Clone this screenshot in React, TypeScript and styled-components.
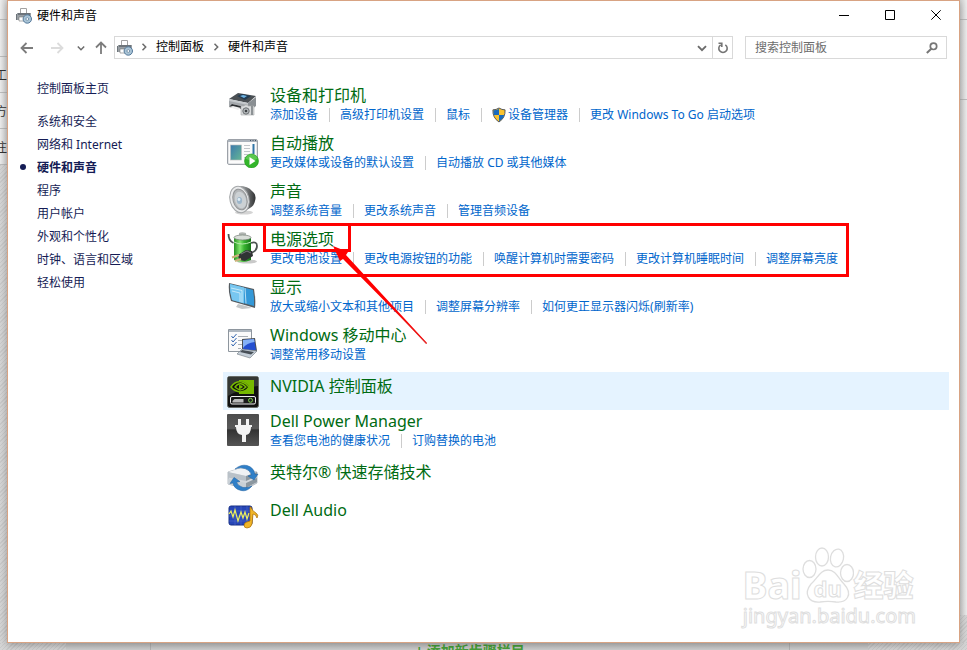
import React from "react";
import styled, { createGlobalStyle, css } from "styled-components";

const GlobalStyle = createGlobalStyle`
  *, *::before, *::after { box-sizing: border-box; }
  body { margin: 0; background: #e0e0e0; }
  body, button, input {
    font-family: "Noto Sans", "Noto Sans CJK SC", sans-serif;
    font-size: 12px;
  }
  button { border: 0; padding: 0; background: none; color: inherit; cursor: pointer; }
  a { text-decoration: none; }
  ul { list-style: none; margin: 0; padding: 0; }
  svg { display: block; flex: none; }
`;

/* ---------- page behind the window ---------- */

const Page = styled.div`
  display: grid;
  grid-template-columns: 7px minmax(0, 1fr) 7px;
  grid-template-rows: minmax(0, 1fr) 7px;
  min-height: 100vh;
  overflow: hidden;
`;

const hatch = css`
  background: repeating-linear-gradient(135deg, #cacaca 0 1px, #d6d6d6 1px 3px);
`;

const Rail = styled.div<{ $side: "left" | "right" }>`
  display: flex;
  flex-direction: column;
  overflow: hidden;
  background: linear-gradient(
    ${(p) => (p.$side === "left" ? "to right" : "to left")},
    #ededed,
    #d4d4d4
  );
`;

const RailCell = styled.div<{ $height: number }>`
  display: flex;
  flex: none;
  align-items: center;
  height: ${(p) => p.$height}px;
  border-bottom: 1px solid #bdbdbd;
  color: #333;
  white-space: nowrap;
`;

const RailText = styled.span`
  margin-left: -5px;
`;

const RailTexture = styled.div`
  flex: 1;
  ${hatch}
`;

const RailBottom = styled.div`
  height: 28px;
  ${hatch}
`;

const RailSpace = styled.div`
  flex: 1;
`;

const Foot = styled.div`
  grid-column: 1 / -1;
  display: grid;
  grid-template-columns: 66px minmax(0, 1fr) 99px;
  overflow: hidden;
  ${hatch}
`;

const FootPanel = styled.div`
  grid-column: 2;
  display: flex;
  justify-content: center;
  padding: 0 78px 0 84px;
  background: linear-gradient(#c6c6c6, #dedede);
`;

const FootCell = styled.div`
  flex: 1;
  overflow: hidden;
  border: solid #b5b5b5;
  border-width: 0 1px;
  text-align: center;
`;

const FootLink = styled.a`
  color: #4aa33a;
  font-size: 14px;
  line-height: 12px;
  font-weight: 700;
`;

/* ---------- window ---------- */

const Window = styled.div`
  display: flex;
  flex-direction: column;
  border: 1px solid #d8a383;
  background: #fff;
  box-shadow: 0 2px 8px rgba(0, 0, 0, 0.3);
  position: relative;
`;

const TitleBar = styled.header`
  display: flex;
  align-items: center;
  height: 29px;
  padding-left: 8px;
  gap: 5px;
  color: #000;
`;

const WindowTitle = styled.h1`
  flex: 1;
  margin: 0;
  font-size: 12px;
  font-weight: 400;
  line-height: 18px;
`;

const Captions = styled.div`
  display: flex;
`;

const CaptionButton = styled.button`
  display: flex;
  align-items: center;
  justify-content: center;
  width: 46px;
  height: 29px;
  padding-bottom: 1px;
`;

const NavBar = styled.nav`
  display: flex;
  align-items: center;
  padding: 6px 12px 0 4px;
`;

const NavButton = styled.button<{ $width: number }>`
  display: flex;
  align-items: center;
  justify-content: center;
  width: ${(p) => p.$width}px;
  height: 23px;
`;

const AddressBar = styled.div`
  display: flex;
  flex: 1;
  align-items: center;
  height: 23px;
  margin: 0 12px 0 2px;
  padding-left: 2px;
  border: 1px solid #d9d9d9;
`;

const Crumbs = styled.div`
  display: flex;
  flex: 1;
  align-items: center;
  gap: 8px;
  padding: 0 0 2px 7px;
`;

const Crumb = styled.a`
  color: #000;
  line-height: 18px;
`;

const RefreshButton = styled.button`
  display: flex;
  align-items: center;
  justify-content: center;
  width: 20px;
  height: 21px;
  border-left: 1px solid #d9d9d9;
`;

const SearchBox = styled.label`
  display: flex;
  align-items: center;
  width: 202px;
  height: 23px;
  padding: 0 8px 0 9px;
  border: 1px solid #d9d9d9;
`;

const SearchInput = styled.input`
  flex: 1;
  min-width: 0;
  padding: 0;
  border: 0;
  outline: 0;
  background: none;
  &::placeholder { color: #6d6d6d; opacity: 1; }
`;

const Body = styled.div`
  display: flex;
  flex: 1;
  padding-right: 10px;
`;

const Sidebar = styled.aside`
  width: 215px;
  flex: none;
  padding: 17px 0 0 12px;
`;

const SideLink = styled.a<{ $current?: boolean }>`
  display: flex;
  align-items: center;
  height: 23px;
  color: #151c55;
  font-weight: ${(p) => (p.$current ? 700 : 400)};
  &::before {
    content: "";
    width: 6px;
    height: 6px;
    margin-right: 11px;
    border-radius: 50%;
    background: ${(p) => (p.$current ? "#151c55" : "transparent")};
  }
`;

const SideHome = styled(SideLink)`
  margin-bottom: 10px;
`;

const Main = styled.main`
  flex: 1;
  min-width: 0;
  padding-top: 25px;
`;

const Row = styled.section<{ $tall: boolean; $active?: boolean }>`
  position: relative;
  display: flex;
  gap: 11px;
  height: ${(p) => (p.$tall ? 48 : 38)}px;
  padding: ${(p) => (p.$tall ? 1 : 4)}px 4px 0;
  background: ${(p) => (p.$active ? "#e5f3ff" : "transparent")};
`;

const IconSlot = styled.div<{ $tall: boolean }>`
  display: flex;
  height: 32px;
  margin-top: ${(p) => (p.$tall ? 3 : 0)}px;
`;

const Title = styled.h2`
  margin: 0;
  font-size: 16px;
  font-weight: 400;
  line-height: 20px;
  white-space: nowrap;
`;

const TitleLink = styled.a`
  color: #006b12;
`;

const Tasks = styled.ul`
  display: flex;
  line-height: 20px;
`;

const Task = styled.li`
  display: flex;
  align-items: center;
  white-space: nowrap;
  & + &::before {
    content: "";
    width: 1px;
    height: 14px;
    margin: 0 10px 0 11px;
    background: #ccc;
  }
`;

const TaskLink = styled.a`
  display: flex;
  align-items: center;
  gap: 2px;
  color: #0066cc;
`;

const FrameOuter = styled.div`
  position: absolute;
  z-index: 1;
  top: -5px;
  left: -1px;
  width: 627px;
  height: 54px;
  border: 3px solid #f00;
  pointer-events: none;
`;

const FrameTitle = styled.div`
  position: absolute;
  z-index: 1;
  top: -5px;
  left: 40px;
  width: 88px;
  height: 29px;
  border: 3px solid #f00;
  pointer-events: none;
`;

const Arrow = styled.svg`
  position: absolute;
  z-index: 2;
  top: 17px;
  left: 109px;
  pointer-events: none;
`;

const Watermark = styled.div`
  position: absolute;
  right: 43px;
  bottom: 14px;
  color: #fff;
  font-family: "Noto Sans", "Noto Sans CJK SC", sans-serif;
  -webkit-text-stroke: 1px #dedede;
  pointer-events: none;
`;

const MarkLine = styled.div`
  display: flex;
  align-items: flex-end;
  height: 59px;
  font-size: 37px;
  font-weight: 800;
  line-height: 39px;
`;

const MarkPaw = styled.div`
  position: relative;
`;

const MarkDu = styled.span`
  position: absolute;
  right: 0;
  bottom: 2px;
  left: 0;
  font-size: 22px;
  font-weight: 700;
  line-height: 28px;
  text-align: center;
`;

const MarkCjk = styled.span`
  font-size: 30px;
`;

const MarkUrl = styled.div`
  font-size: 20px;
  line-height: 24px;
`;

/* ---------- icons ---------- */

const SmallPrinter = () => (
  <svg width="16" height="16" viewBox="0 0 16 16">
    <path d="M4.500 6V.5h6V6" fill="#fff" stroke="#a2a2a2" />
    <path d="M1 5h14v7H1z" fill="#989ea3" />
    <path d="M0 6h1v6H0zM2 5h12v2H2z" fill="#6d747a" />
    <path d="M3 9h5v4H3z" fill="#fff" stroke="#777" strokeWidth=".6" />
    <circle cx="11.300" cy="11" r="4.200" fill="#a8c3d5" stroke="#55799a" />
    <circle cx="11.300" cy="11" r="1.400" fill="#fff" stroke="#7895ad" />
  </svg>
);

const PrinterIcon = () => (
  <svg width="32" height="32" viewBox="0 0 32 32">
    <path d="M2 11 11 5l18 3-8 7z" fill="#4b5054" />
    <path d="m10 8 5-2 9 2-6 4z" fill="#223b52" />
    <path d="m13 8 3-1 4 1-3 2z" fill="#6fb4e4" />
    <path d="m2 11 19 4v4L2 15z" fill="#c4c8cb" />
    <path d="m21 15 8-6v9l-8 6z" fill="#8a8f93" />
    <path d="M2 13v5l3 1v-3l10 2v3l6 1v-5z" fill="#a4a8ac" />
    <path d="m5 16 9 2v3l-12-2z" fill="#2d3033" />
    <path d="m2 19 4-1 8 2-3 2z" fill="#efefef" />
    <path d="M14 18h3l1-1h3v1h6v9H14z" fill="#d9dbdc" stroke="#a5a8aa" strokeWidth=".6" />
    <circle cx="19" cy="23" r="3.200" fill="#b4b8bb" stroke="#6b6f72" />
    <circle cx="19" cy="23" r="1.300" fill="#3e4144" />
    <path d="M24 18h2v9h-2z" fill="#8d9295" />
  </svg>
);

const AutoPlayIcon = () => (
  <svg width="32" height="32" viewBox="0 0 32 32">
    <rect x=".7" y="3.700" width="29.600" height="24.600" rx="1" fill="#fbfbfb" stroke="#858c94" />
    <path d="M1 4h29v2H1z" fill="#aab2bb" />
    <path d="M23 4.500h1M25.500 4.500h1M28 4.500h1" stroke="#456" />
    <linearGradient id="ap" x1="0" y1="0" x2="1" y2="1">
      <stop stopColor="#3c79ad" /><stop offset="1" stopColor="#65b795" />
    </linearGradient>
    <rect x="3.500" y="9" width="11" height="15" fill="url(#ap)" stroke="#bbb" strokeWidth=".6" />
    <path d="M17 9.500h6M17 12.500h6M17 15.500h6M17 18.500h4M17 21.500h3" stroke="#c1c5c9" />
    <path d="M26.500 8v10" stroke="#3175a7" strokeWidth="2" />
    <circle cx="24.500" cy="25" r="7" fill="#33b52a" stroke="#239a1d" strokeWidth=".6" />
    <path d="M18.500 22.500a6.500 6.500 0 0 1 12 0q-6 4-12 0z" fill="#76d568" opacity=".6" />
    <path d="m22.500 21 6 4-6 4z" fill="#fff" />
  </svg>
);

const SpeakerIcon = () => (
  <svg width="32" height="32" viewBox="0 0 32 32">
    <linearGradient id="sp">
      <stop offset=".4" stopColor="#8b8e90" /><stop offset="1" stopColor="#2f3031" />
    </linearGradient>
    <ellipse cx="17" cy="28.500" rx="9" ry="2" fill="#d4d4d4" />
    <path d="M12 2q9 0 13 5 5 4 3 10-1 5-5 7l-8 5-5-1z" fill="url(#sp)" />
    <ellipse cx="12.500" cy="15.500" rx="9.500" ry="13.300" fill="#e9eaeb" stroke="#a4a7a9" transform="rotate(-14 12.500 15.500)" />
    <ellipse cx="13" cy="15.500" rx="7" ry="10.500" fill="#b4b7b9" stroke="#939698" transform="rotate(-14 13 15.500)" />
    <ellipse cx="13.500" cy="16" rx="5.500" ry="8.500" fill="#ccd1d4" transform="rotate(-14 13.500 16)" />
    <ellipse cx="12.500" cy="16.500" rx="2.600" ry="3.600" fill="#9db6ca" />
    <circle cx="12" cy="15.500" r="1.400" fill="#e0edf5" />
  </svg>
);

const PowerIcon = () => (
  <svg width="32" height="32" viewBox="0 0 32 32">
    <linearGradient id="bat">
      <stop stopColor="#269421" /><stop offset=".35" stopColor="#83e66f" />
      <stop offset=".6" stopColor="#37b32f" /><stop offset="1" stopColor="#147515" />
    </linearGradient>
    <ellipse cx="20" cy="29.500" rx="10" ry="2" fill="#c9c9c9" />
    <path d="M12 1q3-1.500 7 0v4h-7z" fill="#b2b7b3" />
    <path d="M7 6q8-5 17 0v22q-9 4-17 0z" fill="url(#bat)" />
    <ellipse cx="15.500" cy="5.500" rx="8.500" ry="2.500" fill="#d9ded9" stroke="#747c75" strokeWidth=".7" />
    <path d="M7 10q8 4 17 0" fill="none" stroke="#b5e8ad" />
    <path d="M1.500 2q0 7 5 9M24 11q6-2 6 3 0 5-6 7" fill="none" stroke="#4d5452" strokeWidth="1.800" />
    <path d="m11 23 8-5 6 1 1 5-8 5-6-1z" fill="#303334" />
    <path d="m14 22 6-3 4 2" fill="none" stroke="#777c7e" />
    <path d="m12 23-7 2.500M14 27l-6 2" stroke="#cdb07b" strokeWidth="2" />
  </svg>
);

const DisplayIcon = () => (
  <svg width="32" height="32" viewBox="0 0 32 32">
    <path d="m11 24 8 2 6 2-10 1-6-2z" fill="#c3c6c8" />
    <path d="m2 3 25 6q2 10 1 19L4 21Q1 11 2 3z" fill="#555b60" />
    <path d="m3 4 23 6q1.500 8 1 16L5 20Q2.500 12 3 4z" fill="#3498d7" />
    <path d="m3 4 14 3.500v16L5 20Q2.500 12 3 4z" fill="#78c7f0" />
    <path d="m4 8 11 2.500v12M5 11l8 2v9M18 8l1 15.500" fill="none" stroke="#d6f0fb" strokeWidth=".8" />
  </svg>
);

const MobilityIcon = () => (
  <svg width="32" height="32" viewBox="0 0 32 32">
    <path d="M1.500 1.500h23v22h-23z" fill="#fafafa" stroke="#8e969e" />
    <path d="M2 2h22v2H2z" fill="#aeb7c0" />
    <path d="M11 8.500h10M11 12.500h5M11 16.500h4M11 20.500h3" stroke="#a9afb5" />
    <path d="m4.500 8 1.500 2 3.500-4m-5 6L6 14l3.500-4m-5 6L6 18l3.500-4" fill="none" stroke="#3366b0" />
    <path d="m15 11 13-1 2 13-15-1z" fill="#4b5054" />
    <path d="m16 12 11-1 2 11H16z" fill="#244fd0" />
    <path d="m16 12 11-1 .6 3q-8 1-11.600 6z" fill="#84b1f6" />
    <path d="m15 21 15 2-7 7-13-4z" fill="#c4ced8" stroke="#707880" strokeWidth=".6" />
    <path d="m15 22 12 2-3 2.500-11-2.500z" fill="#474f57" />
  </svg>
);

const NvidiaIcon = () => (
  <svg width="32" height="32" viewBox="0 0 32 32">
    <rect x=".5" y=".5" width="31" height="31" rx="2" fill="#111" stroke="#686c68" />
    <path d="M1 1h30v9Q15 12 1 20z" fill="#343734" />
    <path d="M12 4h15v14H12v-3q7 0 10-5-4-5-10-5z" fill="#77b900" />
    <path d="M4 11q4-6 11-5 4 1 7 5-3 5-9 5-6-1-9-5z" fill="#0b0b0b" stroke="#77b900" strokeWidth="1.500" />
    <path d="M8 11q3-4 7-3 2 1 4 3-3 3-6 3-3-1-5-3z" fill="#111" stroke="#77b900" strokeWidth="1.400" />
    <path d="M12 9q3 0 4 2-2 2-4 2z" fill="#77b900" />
    <rect x="3.500" y="20.500" width="25" height="7.500" rx="1.500" fill="#1a1a1a" stroke="#eee" />
    <path d="m5.500 25 2-2h9v3.500h-11z" fill="#bbb" />
    <circle cx="23.500" cy="24.300" r="2" fill="#222" stroke="#7dcf4c" />
  </svg>
);

const PlugIcon = () => (
  <svg width="32" height="32" viewBox="0 0 32 32">
    <linearGradient id="pl" x2="0" y2="1">
      <stop stopColor="#4c4c4c" /><stop offset=".45" stopColor="#5a5a5a" />
      <stop offset=".5" stopColor="#333" /><stop offset="1" stopColor="#555" />
    </linearGradient>
    <rect width="32" height="32" rx="1" fill="url(#pl)" />
    <path d="M11 5h3v6h5V5h3v6h3v2h-1q0 7-5 8v7h-4v-7q-6-1-6-8H8v-2h3z" fill="#f3f3f3" />
  </svg>
);

const StorageIcon = () => (
  <svg width="32" height="32" viewBox="0 0 32 32">
    <path d="m1 10 13-4 16 4v11l-11 6-18-5z" fill="#d3d8dd" stroke="#9ba4ac" strokeWidth=".7" />
    <path d="m1 10 13-4 16 4-11 4z" fill="#f0f2f4" />
    <path d="m1 10 18 4v5L1 15.500z" fill="#b9c1c8" />
    <path d="m1 17 18 4v5L1 22z" fill="#c9d0d6" />
    <path d="m19 14 11-4v4l-11 5zm0 7 11-5v4l-11 6z" fill="#8c979f" />
    <path d="M8 7q6-5 12-3.500 7 2 8 9l3-.5-4 6-6-4 3.500-1Q23 8 18 6.500 13 5 8 7z" fill="#2f7fc8" stroke="#1c5f9f" strokeWidth=".5" />
    <path d="M25 24q-5 6-11 4.500Q7 27 6 21l-3 .5 4-6 6 4-3.500.8Q11 24 16 25.500q5 .5 9-1.500z" fill="#2f7fc8" stroke="#1c5f9f" strokeWidth=".5" />
  </svg>
);

const AudioIcon = () => (
  <svg width="32" height="32" viewBox="0 0 32 32">
    <rect x="2" y="6" width="23" height="19" rx="2" fill="#2746b7" stroke="#162f85" />
    <path d="M2 11h23M2 16h23M2 21h23M8 6v19M14 6v19M20 6v19" stroke="#4d69cc" strokeWidth=".6" />
    <path d="m2 14 2-3 2 6 2-7 3 11 3-9 2 6 2-6 2 7 2-6" fill="none" stroke="#eef05d" strokeWidth="1.200" />
    <path d="M24 7q1 4 5 6 3 2 1 5-1-4-4-4l-1 10q-1 4-5 4-3 0-3-3t6-4V7z" fill="#f0b528" stroke="#a76c05" strokeWidth=".7" />
  </svg>
);

const Shield = () => (
  <svg width="14" height="16" viewBox="0 0 15 16">
    <path d="M7.500.5q3 2 6.500 2Q14.500 11 7.500 15.500.5 11 1 2.500q3.500 0 6.500-2z" fill="#f9c22e" stroke="#4a4f57" />
    <path d="M7.500 1.500v6.500H1.800Q1.300 5 1.600 3q3 0 5.900-1.500zM7.500 8h5.700q-1.200 4.300-5.700 6.800z" fill="#1769bd" />
  </svg>
);

const Chevron = ({ down, size = 8 }: { down?: boolean; size?: number }) => (
  <svg width={size} height={size} viewBox="0 0 8 8" fill="none" stroke="#6b6b6b" strokeWidth="1.500">
    <path d={down ? "M.8 2.500 4 5.700l3.200-3.200" : "M2.500.8 5.700 4 2.500 7.200"} />
  </svg>
);

const NavArrow = ({ kind }: { kind: "back" | "forward" | "up" }) => {
  const paths = {
    back: "M13 7H2M6.500 2 1.500 7l5 5",
    forward: "M1 7h11M7.500 2l5 5-5 5",
    up: "M7 13V2M2 6.500l5-5 5 5",
  };
  return (
    <svg width="14" height="14" viewBox="0 0 14 14" fill="none" strokeWidth="1.800"
      stroke={kind === "forward" ? "#dcdcdc" : "#7c7c7c"}>
      <path d={paths[kind]} />
    </svg>
  );
};

/* ---------- data ---------- */

type Item = {
  title: string;
  icon: React.ReactNode;
  tasks?: { label: string; shield?: boolean }[];
  active?: boolean;
  marked?: boolean;
};

const t = (...labels: string[]) => labels.map((label) => ({ label }));

const items: Item[] = [
  {
    title: "设备和打印机",
    icon: <PrinterIcon />,
    tasks: [
      ...t("添加设备", "高级打印机设置", "鼠标"),
      { label: "设备管理器", shield: true },
      ...t("更改 Windows To Go 启动选项"),
    ],
  },
  { title: "自动播放", icon: <AutoPlayIcon />, tasks: t("更改媒体或设备的默认设置", "自动播放 CD 或其他媒体") },
  { title: "声音", icon: <SpeakerIcon />, tasks: t("调整系统音量", "更改系统声音", "管理音频设备") },
  {
    title: "电源选项",
    icon: <PowerIcon />,
    tasks: t("更改电池设置", "更改电源按钮的功能", "唤醒计算机时需要密码", "更改计算机睡眠时间", "调整屏幕亮度"),
    marked: true,
  },
  { title: "显示", icon: <DisplayIcon />, tasks: t("放大或缩小文本和其他项目", "调整屏幕分辨率", "如何更正显示器闪烁(刷新率)") },
  { title: "Windows 移动中心", icon: <MobilityIcon />, tasks: t("调整常用移动设置") },
  { title: "NVIDIA 控制面板", icon: <NvidiaIcon />, active: true },
  { title: "Dell Power Manager", icon: <PlugIcon />, tasks: t("查看您电池的健康状况", "订购替换的电池") },
  { title: "英特尔® 快速存储技术", icon: <StorageIcon /> },
  { title: "Dell Audio", icon: <AudioIcon /> },
];

const categories = ["系统和安全", "网络和 Internet", "硬件和声音", "程序", "用户帐户", "外观和个性化", "时钟、语言和区域", "轻松使用"];

const captions = [
  { label: "最小化", d: "M0 5.500h10" },
  { label: "最大化", d: "M.5.500h9v9h-9z" },
  { label: "关闭", d: "m.3.300 9.400 9.400m0-9.400L.3 9.700" },
];

export default function App() {
  return (
    <>
      <GlobalStyle />
      <Page>
        <Rail $side="left">
          <RailCell $height={20} />
          <RailCell $height={37} />
          <RailCell $height={36}><RailText>工具</RailText></RailCell>
          <RailCell $height={36}><RailText>方法</RailText></RailCell>
          <RailCell $height={36}><RailText>注</RailText></RailCell>
          <RailTexture />
        </Rail>
        <Window>
          <TitleBar>
            <SmallPrinter />
            <WindowTitle>硬件和声音</WindowTitle>
            <Captions>
              {captions.map((g) => (
                <CaptionButton key={g.label} aria-label={g.label}>
                  <svg width="10" height="10" viewBox="0 0 10 10" fill="none" stroke="#000"><path d={g.d} /></svg>
                </CaptionButton>
              ))}
            </Captions>
          </TitleBar>
          <NavBar aria-label="导航">
            <NavButton $width={30} aria-label="后退"><NavArrow kind="back" /></NavButton>
            <NavButton $width={30} aria-label="前进"><NavArrow kind="forward" /></NavButton>
            <NavButton $width={18} aria-label="最近"><Chevron down /></NavButton>
            <NavButton $width={22} aria-label="向上"><NavArrow kind="up" /></NavButton>
            <AddressBar>
              <SmallPrinter />
              <Crumbs>
                <Chevron />
                <Crumb href="#home">控制面板</Crumb>
                <Chevron />
                <Crumb href="#hardware">硬件和声音</Crumb>
              </Crumbs>
              <NavButton $width={20} aria-label="展开"><Chevron down size={10} /></NavButton>
              <RefreshButton aria-label="刷新">
                <svg width="12" height="12" viewBox="0 0 12 12" fill="none" stroke="#747474" strokeWidth="1.600">
                  <path d="M8.300 2.800a4.200 4.200 0 1 1-4.600 0" />
                  <path d="M1.500 1.300h3.300v3.600" />
                </svg>
              </RefreshButton>
            </AddressBar>
            <SearchBox>
              <SearchInput type="text" placeholder="搜索控制面板" aria-label="搜索控制面板" />
              <svg width="12" height="12" viewBox="0 0 12 12" fill="none" stroke="#777">
                <circle cx="7.500" cy="4.300" r="3.200" strokeWidth="1.700" />
                <path d="M5.300 6.700.8 11" strokeWidth="2" />
              </svg>
            </SearchBox>
          </NavBar>
          <Body>
            <Sidebar>
              <SideHome href="#home">控制面板主页</SideHome>
              <ul>
                {categories.map((c) => (
                  <li key={c}>
                    <SideLink href="#category" $current={c === "硬件和声音"}>{c}</SideLink>
                  </li>
                ))}
              </ul>
            </Sidebar>
            <Main>
              {items.map((item) => (
                <Row key={item.title} $tall={!!item.tasks} $active={item.active}>
                  <IconSlot $tall={!!item.tasks}>{item.icon}</IconSlot>
                  <div>
                    <Title><TitleLink href="#item">{item.title}</TitleLink></Title>
                    {item.tasks && (
                      <Tasks>
                        {item.tasks.map((task) => (
                          <Task key={task.label}>
                            <TaskLink href="#task">
                              {task.shield && <Shield />}
                              {task.label}
                            </TaskLink>
                          </Task>
                        ))}
                      </Tasks>
                    )}
                  </div>
                  {item.marked && (
                    <>
                      <FrameOuter />
                      <FrameTitle />
                      <Arrow width="96" height="100" viewBox="0 0 96 100">
                        <path d="M1 1 16 7l-2 3 81 88-.5.500L11 14l-3 2z" fill="#f00" />
                        <path d="M50 52 95 98.500l-1 .5z" fill="#d22" />
                      </Arrow>
                    </>
                  )}
                </Row>
              ))}
            </Main>
          </Body>
          <Watermark>
            <MarkLine>
              Bai
              <MarkPaw>
                <svg width="52" height="58" viewBox="0 0 52 58" fill="#fff" stroke="#dedede" strokeWidth="1.300">
                  <ellipse cx="7.500" cy="23" rx="6.500" ry="8.500" />
                  <ellipse cx="20" cy="11" rx="6.500" ry="9" />
                  <ellipse cx="35" cy="12" rx="6.500" ry="9" transform="rotate(12 35 12)" />
                  <ellipse cx="45" cy="27" rx="6.500" ry="8.500" />
                  <path d="M26 24c8 0 10 8 16 14 10 11 2 19-8 18-6-1-10-1-16 0-11 1-17-8-9-18 7-6 9-14 17-14z" />
                </svg>
                <MarkDu>du</MarkDu>
              </MarkPaw>
              <MarkCjk>经验</MarkCjk>
            </MarkLine>
            <MarkUrl>jingyan.baidu.com</MarkUrl>
          </Watermark>
        </Window>
        <Rail $side="right">
          <RailCell $height={20} />
          <RailCell $height={80} />
          <RailSpace />
          <RailBottom />
        </Rail>
        <Foot>
          <FootPanel>
            <FootCell><FootLink href="#add">+ 添加新步骤栏目</FootLink></FootCell>
          </FootPanel>
        </Foot>
      </Page>
    </>
  );
}
